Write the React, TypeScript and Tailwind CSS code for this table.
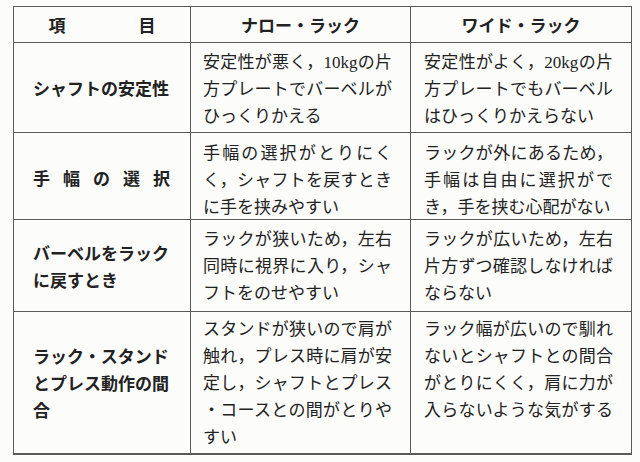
import React from "react";

const body = { fontFamily: '"Liberation Serif", "Noto Sans CJK JP", serif' };
const gothic = { fontFamily: '"Noto Sans CJK JP", sans-serif' };

type Cell = { lines: string[]; justify?: number };

function Lines({ lines, justify }: Cell) {
  const j = justify ?? lines.length - 1;
  return (
    <div className="w-[189px]">
      {lines.map((l, i) => (
        <div
          key={i}
          className={
            i < j
              ? "leading-[27px] text-justify [text-align-last:justify]"
              : "leading-[27px]"
          }
        >
          {l}
        </div>
      ))}
    </div>
  );
}

function Head({ lines, spread }: { lines: string[]; spread?: boolean }) {
  return (
    <div className="w-[137px] font-bold" style={gothic}>
      {lines.map((l, i) => (
        <div
          key={i}
          className={
            spread
              ? "leading-[27px] text-justify [text-align-last:justify]"
              : "leading-[27px] whitespace-nowrap"
          }
        >
          {l}
        </div>
      ))}
    </div>
  );
}

const rows: { h: string; pt: string; head: string[]; spread?: boolean; a: Cell; b: Cell }[] = [
  {
    h: "h-[90px]",
    pt: "pt-[6px]",
    head: ["シャフトの安定性"],
    a: { lines: ["安定性が悪く，10kgの片", "方プレートでバーベルが", "ひっくりかえる"] },
    b: { lines: ["安定性がよく，20kgの片", "方プレートでもバーベル", "はひっくりかえらない"] },
  },
  {
    h: "h-[87px]",
    pt: "pt-[7px]",
    head: ["手幅の選択"],
    spread: true,
    a: { lines: ["手幅の選択がとりにく", "く，シャフトを戻すとき", "に手を挟みやすい"] },
    b: { lines: ["ラックが外にあるため，", "手幅は自由に選択がで", "き，手を挟む心配がない"] },
  },
  {
    h: "h-[92px]",
    pt: "pt-[6px]",
    head: ["バーベルをラック", "に戻すとき"],
    a: { lines: ["ラックが狭いため，左右", "同時に視界に入り，シャ", "フトをのせやすい"] },
    b: { lines: ["ラックが広いため，左右", "片方ずつ確認しなければ", "ならない"] },
  },
  {
    h: "h-[141px]",
    pt: "pt-[4px]",
    head: ["ラック・スタンド", "とプレス動作の間", "合"],
    a: {
      lines: [
        "スタンドが狭いので肩が",
        "触れ，プレス時に肩が安",
        "定し，シャフトとプレス",
        "・コースとの間がとりや",
        "すい",
      ],
    },
    b: {
      lines: [
        "ラック幅が広いので馴れ",
        "ないとシャフトとの間合",
        "がとりにくく，肩に力が",
        "入らないような気がする",
      ],
      justify: 4,
    },
  },
];

export default function App() {
  return (
    <div className="w-[640px] h-[462px] bg-[#fcfcfb] pt-[6px] pl-[13px] text-[17px] text-[#222222] overflow-hidden">
      <div className="w-[619px] border-l border-t border-r border-b-2 border-[#5a5a5a]">
        {/* header */}
        <div className="grid grid-cols-[177px_220px_1fr] h-[36px] border-b border-[#5a5a5a] font-bold" style={gothic}>
          <div className="border-r border-[#5a5a5a] flex items-center justify-center">
            <div className="w-[107px] flex justify-between">
              <span>項</span>
              <span>目</span>
            </div>
          </div>
          <div className="border-r border-[#5a5a5a] flex items-center justify-center">ナロー・ラック</div>
          <div className="flex items-center justify-center">ワイド・ラック</div>
        </div>
        {rows.map((r, i) => (
          <div
            key={i}
            className={
              "grid grid-cols-[177px_220px_1fr] " +
              r.h +
              (i < rows.length - 1 ? " border-b border-[#5a5a5a]" : "")
            }
          >
            <div className="border-r border-[#5a5a5a] flex items-center pl-[19px]">
              <Head lines={r.head} spread={r.spread} />
            </div>
            <div className={"border-r border-[#5a5a5a] flex items-start pl-[12px] " + r.pt} style={body}>
              <Lines {...r.a} />
            </div>
            <div className={"flex items-start pl-[13px] " + r.pt} style={body}>
              <Lines {...r.b} />
            </div>
          </div>
        ))}
      </div>
    </div>
  );
}
